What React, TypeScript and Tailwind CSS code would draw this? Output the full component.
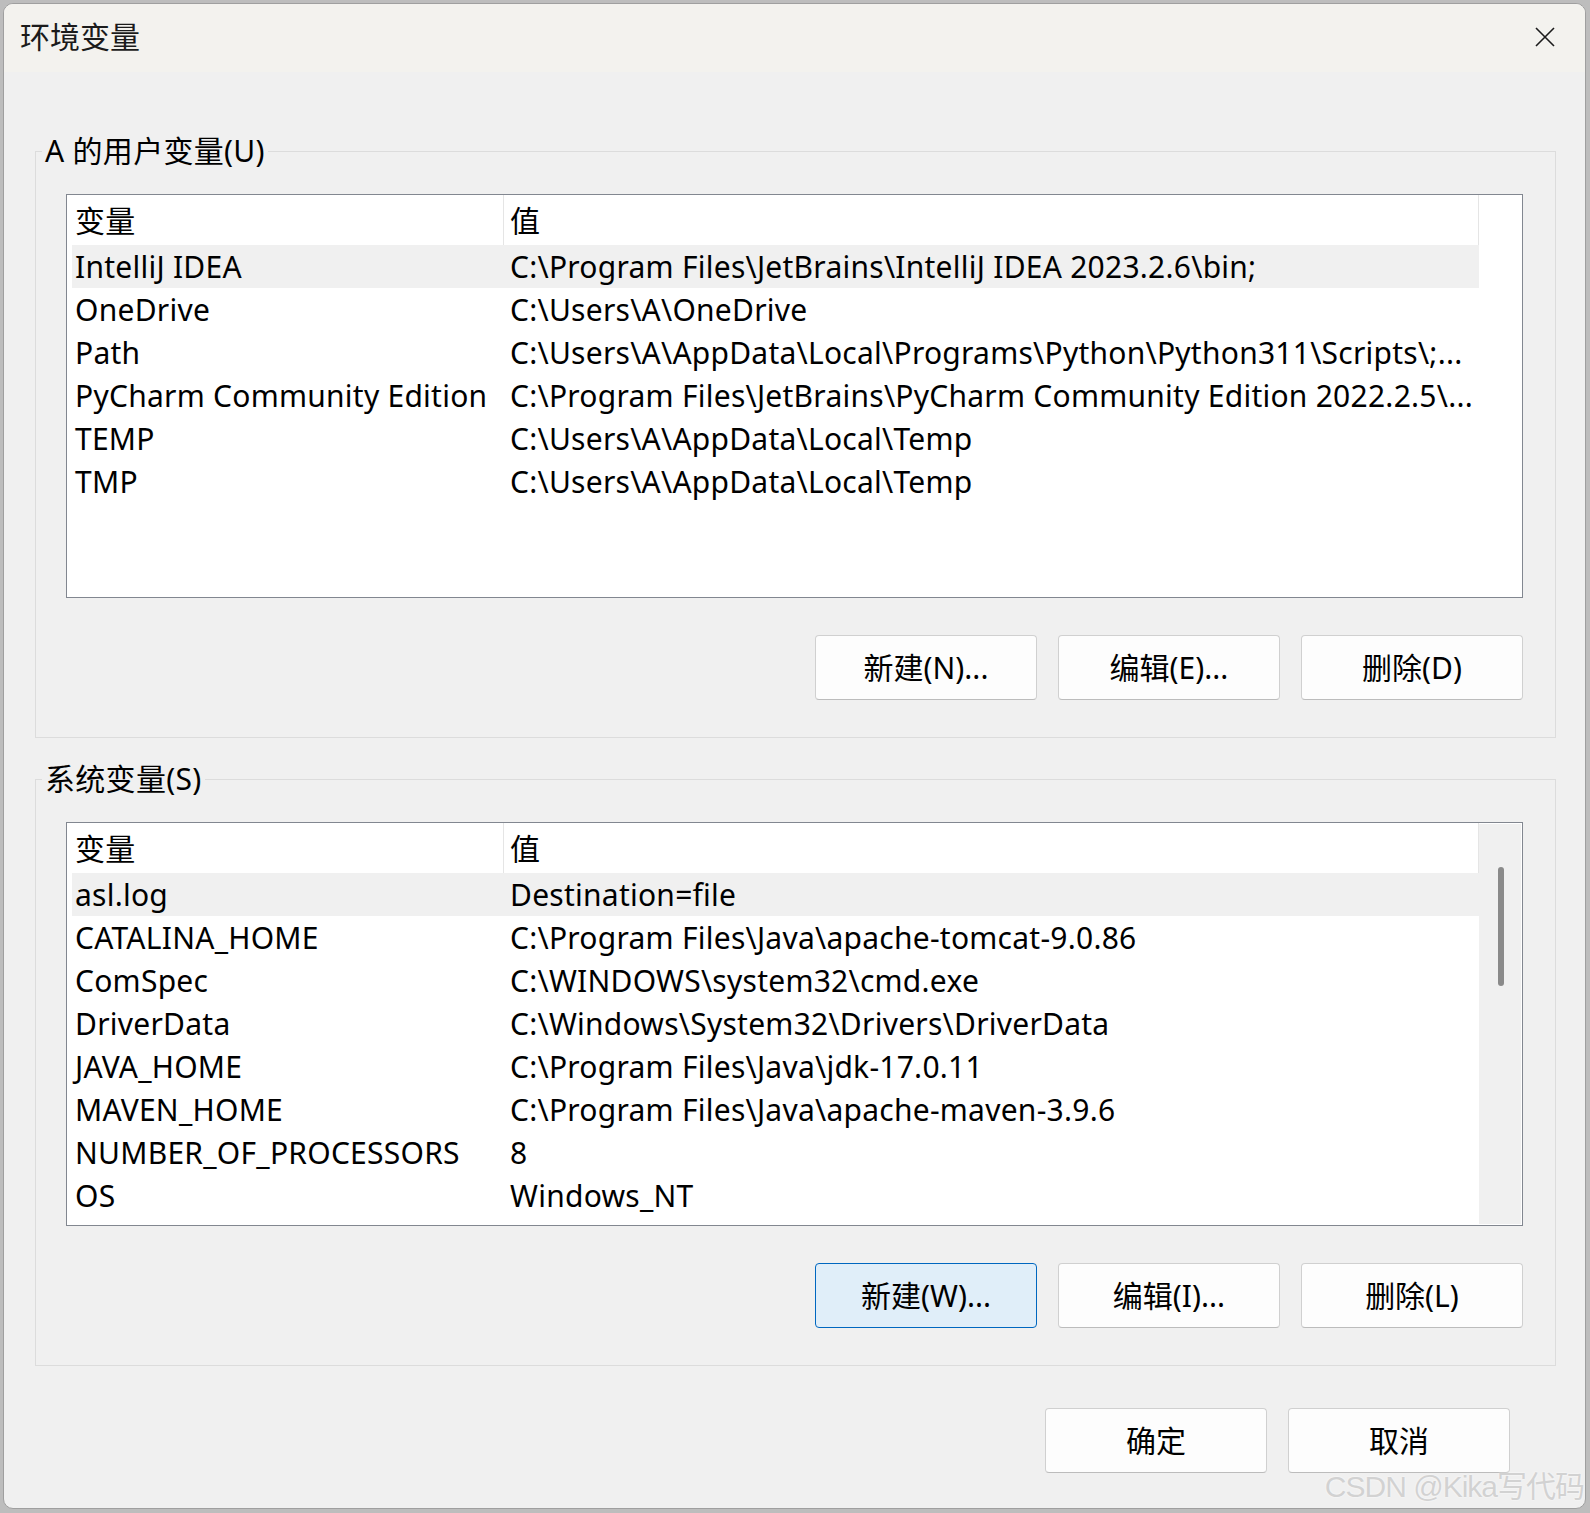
import React from 'react';

type EnvVar = { name: string; value: string };

const userVars: EnvVar[] = [
    { name: 'IntelliJ IDEA', value: 'C:\\Program Files\\JetBrains\\IntelliJ IDEA 2023.2.6\\bin;' },
    { name: 'OneDrive', value: 'C:\\Users\\A\\OneDrive' },
    { name: 'Path', value: 'C:\\Users\\A\\AppData\\Local\\Programs\\Python\\Python311\\Scripts\\;...' },
    { name: 'PyCharm Community Edition', value: 'C:\\Program Files\\JetBrains\\PyCharm Community Edition 2022.2.5\\...' },
    { name: 'TEMP', value: 'C:\\Users\\A\\AppData\\Local\\Temp' },
    { name: 'TMP', value: 'C:\\Users\\A\\AppData\\Local\\Temp' },
];

const systemVars: EnvVar[] = [
    { name: 'asl.log', value: 'Destination=file' },
    { name: 'CATALINA_HOME', value: 'C:\\Program Files\\Java\\apache-tomcat-9.0.86' },
    { name: 'ComSpec', value: 'C:\\WINDOWS\\system32\\cmd.exe' },
    { name: 'DriverData', value: 'C:\\Windows\\System32\\Drivers\\DriverData' },
    { name: 'JAVA_HOME', value: 'C:\\Program Files\\Java\\jdk-17.0.11' },
    { name: 'MAVEN_HOME', value: 'C:\\Program Files\\Java\\apache-maven-3.9.6' },
    { name: 'NUMBER_OF_PROCESSORS', value: '8' },
    { name: 'OS', value: 'Windows_NT' },
];

interface VarListProps {
    rows: EnvVar[];
    showScrollbar?: boolean;
}

const VarList: React.FC<VarListProps> = ({ rows, showScrollbar }) => {
    return (
        <div className="flex h-[404px] w-[1457px] overflow-hidden border border-[#828790] bg-white tracking-[0.25px]">
            <div className="flex min-w-0 flex-1 flex-col">
                <div className="flex h-[50px] shrink-0">
                    <div className="flex w-[437px] items-center border-r border-[#e5e5e5] pl-[8px]">变量</div>
                    <div className="flex flex-1 items-center border-r border-[#e5e5e5] pl-[6px]">值</div>
                </div>
                {rows.map((row, i) => (
                    <div
                        key={row.name}
                        className={`ml-[5px] grid h-[43px] shrink-0 grid-cols-[432px_1fr] items-center ${i === 0 ? 'bg-[#f0f0f0]' : ''}`}
                    >
                        <div className="overflow-hidden whitespace-nowrap pl-[3px]">{row.name}</div>
                        <div className="overflow-hidden whitespace-nowrap pl-[6px]">{row.value}</div>
                    </div>
                ))}
            </div>
            <div className="w-[43px] shrink-0 py-[1px] pr-[1px]">
                {showScrollbar && (
                    <div className="flex h-full justify-center bg-[#f0f0f0] pt-[43px]">
                        <div className="ml-[1px] h-[119px] w-[6px] rounded-full bg-[#8a8a8a]" />
                    </div>
                )}
            </div>
        </div>
    );
};

interface DlgButtonProps {
    label: string;
    focused?: boolean;
}

const DlgButton: React.FC<DlgButtonProps> = ({ label, focused }) => (
    <button
        type="button"
        className={`flex h-[65px] w-[222px] items-center justify-center rounded-[4px] border ${focused ? 'border-[#0067c0] bg-[#e0eef9]' : 'border-[#d0d0d0] border-b-[#bcbcbc] bg-[#fdfdfd]'}`}
    >
        {label}
    </button>
);

interface GroupBoxProps {
    title: string;
    rows: EnvVar[];
    showScrollbar?: boolean;
    buttons: { label: string; focused?: boolean }[];
    className?: string;
}

const GroupBox: React.FC<GroupBoxProps> = ({ title, rows, showScrollbar, buttons, className }) => (
    <fieldset className={`ml-[31px] w-[1521px] border border-[#dcdcdc] ${className ?? ''}`}>
        <legend className="ml-[6px] px-[3px] leading-[40px] tracking-[0.3px]">{title}</legend>
        <div className="pb-[37px] pl-[30px] pr-[32px] pt-[23px]">
            <VarList rows={rows} showScrollbar={showScrollbar} />
            <div className="mt-[37px] flex justify-end gap-[21px]">
                {buttons.map((b) => (
                    <DlgButton key={b.label} label={b.label} focused={b.focused} />
                ))}
            </div>
        </div>
    </fieldset>
);

export default function App() {
    return (
        <div className="relative h-[1513px] w-[1590px] overflow-hidden bg-[#bdbdbd] pl-[3px] pt-[3px] font-['Noto_Sans','Noto_Sans_CJK_SC',sans-serif] text-[30px] text-black">
            <div className="flex h-[1506px] w-[1583px] flex-col overflow-hidden rounded-[10px] border border-[#9f9f9f] bg-[#f0f0f0]">
                <div className="flex h-[68px] shrink-0 items-center justify-between bg-[#f3f2ee] pb-[3px] pl-[16px] pr-[30px]">
                    <span className="text-[#1b1b1b]">环境变量</span>
                    <svg width="20" height="20" viewBox="0 0 20 20" fill="none" stroke="#1b1b1b" strokeWidth="1.6">
                        <path d="M1 1 L19 19 M19 1 L1 19" />
                    </svg>
                </div>

                <GroupBox
                    className="mt-[59px]"
                    title="A 的用户变量(U)"
                    rows={userVars}
                    buttons={[{ label: '新建(N)...' }, { label: '编辑(E)...' }, { label: '删除(D)' }]}
                />

                <GroupBox
                    className="mt-[21px]"
                    title="系统变量(S)"
                    rows={systemVars}
                    showScrollbar
                    buttons={[{ label: '新建(W)...', focused: true }, { label: '编辑(I)...' }, { label: '删除(L)' }]}
                />

                <div className="mr-[75px] mt-[42px] flex justify-end gap-[21px]">
                    <DlgButton label="确定" />
                    <DlgButton label="取消" />
                </div>
            </div>

            <div className="absolute bottom-[4px] right-[6px] font-['Liberation_Sans','Noto_Sans_CJK_SC',sans-serif] text-[30px] tracking-[-1px] text-[#d2d2d2] [text-shadow:0_0_2px_#ffffff]">
                CSDN @Kika写代码
            </div>
        </div>
    );
}
